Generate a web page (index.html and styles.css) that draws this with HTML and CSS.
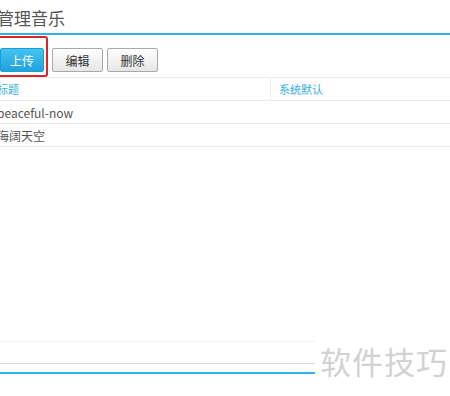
FILE: index.html
```html
<!DOCTYPE html>
<html lang="zh-CN">
<head>
    <meta charset="UTF-8">
    <meta name="viewport" content="width=device-width, initial-scale=1.0">
    <title>管理音乐</title>
    <link rel="stylesheet" href="styles.css">
</head>
<body>
    <div class="page">
        <h1 class="title">管理音乐</h1>

        <div class="toolbar">
            <div class="mark">
                <button class="btn btn-primary">上传</button>
            </div>
            <button class="btn">编辑</button>
            <button class="btn">删除</button>
        </div>

        <table class="music-table">
            <thead>
                <tr>
                    <th class="col-title">标题</th>
                    <th class="col-default">系统默认</th>
                </tr>
            </thead>
            <tbody>
                <tr>
                    <td>peaceful-now</td>
                    <td></td>
                </tr>
                <tr>
                    <td>海阔天空</td>
                    <td></td>
                </tr>
            </tbody>
        </table>

        <div class="footer">
            <div class="line-light"></div>
            <div class="line-gray"></div>
            <div class="line-blue"></div>
        </div>
    </div>

    <div class="watermark">软件技巧</div>
</body>
</html>
```

FILE: styles.css
```css
body {
    margin: 0;
    background-color: #ffffff;
    font-family: "Noto Sans CJK SC", "Noto Sans", sans-serif;
    color: #555555;
    overflow: hidden;
}
.page {
    margin-left: -3px;
    width: 460px;
}
.title {
    margin: 0;
    height: 33px;
    font-size: 17px;
    font-weight: normal;
    line-height: 36px;
    color: #555555;
    border-bottom: 2px solid #2cb4e6;
    box-sizing: content-box;
}

.toolbar {
    display: flex;
    align-items: flex-end;
    gap: 4px;
    height: 42px;
}
.mark {
    margin-left: -2px;
    padding: 10px 2px 3px 3px;
    border: 2px solid #d9252b;
    border-radius: 3px;
}
.btn {
    display: block;
    height: 24px;
    width: 51px;
    padding: 0;
    font-family: inherit;
    font-size: 12px;
    color: #333333;
    background: linear-gradient(#ffffff, #e6e6e6);
    border: 1px solid #a9a9a9;
    border-radius: 2px;
    margin-bottom: 5px;
}
.mark .btn {
    margin-bottom: 0;
}
.btn-primary {
    width: 44px;
    color: #ffffff;
    background: linear-gradient(#45c3f1, #1fa3dc);
    border: 1px solid #1d9bd3;
}

.music-table {
    width: 100%;
    border-collapse: collapse;
    font-size: 11px;
}
.music-table th,
.music-table td {
    height: 22px;
    padding: 0;
    text-align: left;
    font-weight: normal;
    border-top: 1px solid #e8ebed;
    border-bottom: 1px solid #e8ebed;
}
.music-table th {
    color: #35b0e0;
}
.music-table td {
    font-size: 12px;
    color: #555555;
}
.music-table .col-title {
    width: 273px;
    border-right: 1px solid #eceeef;
}
.music-table .col-default {
    padding-left: 8px;
}

.footer {
    margin-top: 194px;
    width: 318px;
}
.line-light {
    height: 1px;
    background-color: #f1f2f3;
}
.line-gray {
    height: 1px;
    margin-top: 21px;
    background-color: #dcdcdc;
}
.line-blue {
    height: 2px;
    margin-top: 8px;
    background-color: #2cb4e6;
}

.watermark {
    position: absolute;
    left: 320px;
    top: 338px;
    font-size: 31px;
    color: #d2d2d2;
    letter-spacing: 1px;
    font-family: "Noto Sans CJK SC", sans-serif;
}
```
